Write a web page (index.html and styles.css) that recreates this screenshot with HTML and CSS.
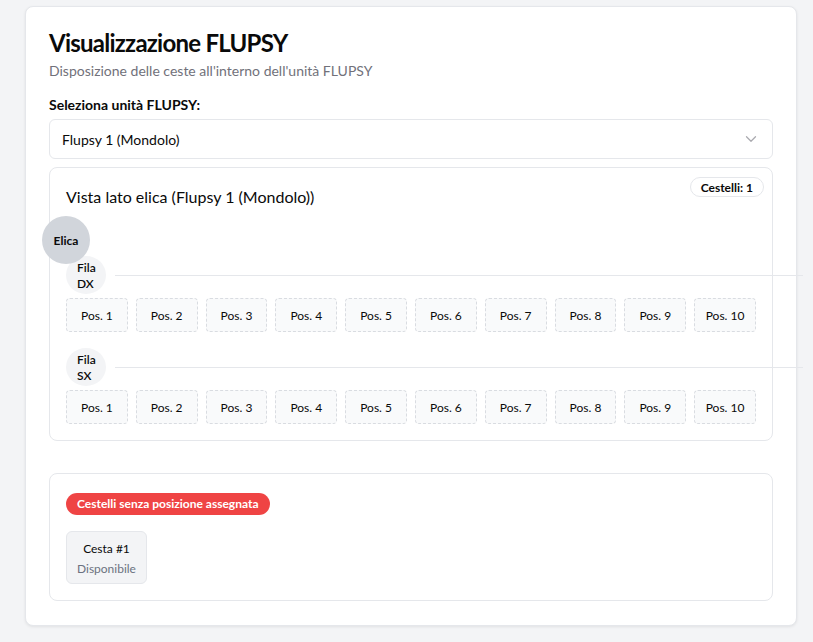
FILE: index.html
```html
<!DOCTYPE html>
<html lang="it">
<head>
<meta charset="utf-8">
<title>Visualizzazione FLUPSY</title>
<link rel="stylesheet" href="styles.css">
</head>
<body>
<div class="card">
  <div class="card-header">
    <h1 class="title">Visualizzazione FLUPSY</h1>
    <p class="subtitle">Disposizione delle ceste all'interno dell'unità FLUPSY</p>
  </div>
  <label class="label">Seleziona unità FLUPSY:</label>
  <div class="select">
    <span>Flupsy 1 (Mondolo)</span>
    <svg class="chevron" width="18" height="18" viewBox="0 0 24 24" fill="none" stroke="currentColor" stroke-width="1.6" stroke-linecap="round" stroke-linejoin="round"><path d="m6 9 6 6 6-6"/></svg>
  </div>

  <div class="panel view">
    <span class="count-badge">Cestelli: 1</span>
    <h2 class="view-title">Vista lato elica (Flupsy 1 (Mondolo))</h2>
    <div class="elica">Elica</div>
    <div class="rows">
      <div class="row">
        <div class="row-head">
          <div class="fila">Fila DX</div>
          <div class="line"></div>
        </div>
        <div class="positions">
          <div class="pos">Pos. 1</div><div class="pos">Pos. 2</div><div class="pos">Pos. 3</div><div class="pos">Pos. 4</div><div class="pos">Pos. 5</div><div class="pos">Pos. 6</div><div class="pos">Pos. 7</div><div class="pos">Pos. 8</div><div class="pos">Pos. 9</div><div class="pos">Pos. 10</div>
        </div>
      </div>
      <div class="row">
        <div class="row-head">
          <div class="fila">Fila SX</div>
          <div class="line"></div>
        </div>
        <div class="positions">
          <div class="pos">Pos. 1</div><div class="pos">Pos. 2</div><div class="pos">Pos. 3</div><div class="pos">Pos. 4</div><div class="pos">Pos. 5</div><div class="pos">Pos. 6</div><div class="pos">Pos. 7</div><div class="pos">Pos. 8</div><div class="pos">Pos. 9</div><div class="pos">Pos. 10</div>
        </div>
      </div>
    </div>
  </div>

  <div class="panel unassigned">
    <span class="red-badge">Cestelli senza posizione assegnata</span>
    <div class="baskets">
      <div class="basket">
        <div class="basket-name">Cesta #1</div>
        <div class="basket-state">Disponibile</div>
      </div>
    </div>
  </div>
</div>
</body>
</html>
```

FILE: styles.css
```css
* { box-sizing: border-box; }
html, body { margin: 0; padding: 0; }
body {
  background: #f3f4f6;
  font-family: "Lato", "Noto Sans", sans-serif;
  color: #0a0a0a;
  padding: 6px 16px 16px 25px;
  overflow: hidden;
}
.card {
  width: 772px;
  background: #fff;
  border: 1px solid #e5e7eb;
  border-radius: 8px;
  box-shadow: 0 1px 3px rgba(0,0,0,0.08);
  padding: 24px 23px 24px;
}
.card-header { display: flex; flex-direction: column; gap: 6px; }
.title {
  margin: 0;
  font-size: 24px;
  line-height: 24px;
  font-weight: 700;
  letter-spacing: -0.75px;
}
.subtitle { margin: 0; font-size: 14px; line-height: 20px; color: #71717a; }
.label {
  display: block;
  margin-top: 14px;
  font-size: 14px;
  line-height: 20px;
  font-weight: 700;
}
.select {
  margin-top: 4px;
  height: 40px;
  border: 1px solid #e5e7eb;
  border-radius: 6px;
  display: flex;
  align-items: center;
  justify-content: space-between;
  padding: 0 12px 0 12px;
  font-size: 14px;
}
.chevron { color: #71717a; opacity: 0.6; }
.panel {
  border: 1px solid #e5e7eb;
  border-radius: 8px;
  position: relative;
}
.view { margin-top: 8px; padding: 17px 16px 16px; }
.count-badge {
  position: absolute;
  top: 9px;
  right: 8px;
  height: 20px;
  padding: 0 10px;
  border: 1px solid #e5e7eb;
  border-radius: 999px;
  font-size: 12px;
  font-weight: 700;
  display: flex;
  align-items: center;
}
.view-title { margin: 0; font-size: 16px; line-height: 24px; font-weight: 400; }
.elica {
  position: absolute;
  left: -8px;
  top: 48px;
  width: 48px;
  height: 48px;
  border-radius: 50%;
  background: #d1d5db;
  display: flex;
  align-items: center;
  justify-content: center;
  font-size: 12px;
  font-weight: 700;
  z-index: 1;
}
.rows { margin-top: 47px; display: flex; flex-direction: column; gap: 16px; }
.row { display: flex; flex-direction: column; gap: 4px; }
.row-head { display: flex; align-items: center; }
.fila {
  width: 40px;
  height: 38px;
  border-radius: 50%;
  background: #f3f4f6;
  font-size: 12px;
  line-height: 16px;
  font-weight: 600;
  padding: 2px 8px 0 11px;
  display: flex;
  align-items: center;
}
.line { flex: 1; height: 1px; background: #e5e7eb; margin-left: 9px; margin-right: -47px; }
.positions { display: grid; grid-template-columns: repeat(10, 1fr); gap: 8px; }
.pos {
  height: 34px;
  border: 1px dashed #d9dce1;
  border-radius: 4px;
  background: #f9fafb;
  font-size: 12px;
  display: flex;
  align-items: center;
  justify-content: center;
}
.unassigned { margin-top: 32px; padding: 18px 16px 16px; }
.red-badge {
  display: inline-flex;
  align-items: center;
  height: 22px;
  padding: 0 11px;
  border-radius: 999px;
  background: #ef4444;
  color: #fff;
  font-size: 12px;
  font-weight: 700;
}
.baskets { margin-top: 16px; display: flex; }
.basket {
  border: 1px solid #e5e7eb;
  border-radius: 6px;
  background: #f3f4f6;
  padding: 8px 10px 5px;
  text-align: center;
  font-size: 12px;
}
.basket-name { line-height: 18px; }
.basket-state { line-height: 18px; margin-top: 2px; color: #6b7280; }
```
